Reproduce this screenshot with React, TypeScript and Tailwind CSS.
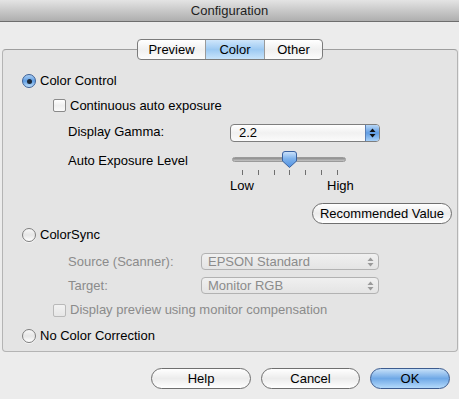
import React from "react";

const font = { fontFamily: '"Liberation Sans", Arial, sans-serif' };

const Radio = ({ checked }: { checked?: boolean }) =>
    checked ? (
        <span className="flex w-[14px] h-[14px] shrink-0 items-center justify-center rounded-full border border-[#3b5f96] bg-gradient-to-b from-[#a9cdf2] via-[#5f9de2] to-[#bfe0fb]">
            <span className="w-[5px] h-[5px] rounded-full bg-[#1c2a3a]" />
        </span>
    ) : (
        <span className="block w-[14px] h-[14px] shrink-0 rounded-full border border-[#7e7e7e] bg-gradient-to-b from-[#f8f8f8] via-[#e6e6e6] to-[#ffffff] shadow-[0_1px_0_rgba(255,255,255,0.6)]" />
    );

const Checkbox = ({ disabled }: { disabled?: boolean }) => (
    <span
        className={`block w-[13px] h-[13px] shrink-0 rounded-[2px] border bg-gradient-to-b ${
            disabled ? "border-[#b9b9b9] from-[#f2f2f2] to-[#e6e6e6]" : "border-[#8a8a8a] from-[#ffffff] via-[#f0f0f0] to-[#fafafa]"
        }`}
    />
);

const Arrows = ({ color }: { color: string }) => (
    <svg width="7" height="10" viewBox="0 0 7 10">
        <path d="M3.5 0.5 L6.5 4 L0.5 4 Z" fill={color} />
        <path d="M3.5 9.5 L6.5 6 L0.5 6 Z" fill={color} />
    </svg>
);

const Knob = () => (
    <svg width="15" height="17" viewBox="0 0 15 17">
        <defs>
            <linearGradient id="kg" x1="0" y1="0" x2="0" y2="1">
                <stop offset="0" stopColor="#cfe4fb" />
                <stop offset="0.45" stopColor="#7fb3ec" />
                <stop offset="1" stopColor="#4f8fe0" />
            </linearGradient>
        </defs>
        <path d="M3 0.5 H12 Q14.5 0.5 14.5 3 V10 L7.5 16.5 L0.5 10 V3 Q0.5 0.5 3 0.5 Z" fill="url(#kg)" stroke="#3a62a0" />
    </svg>
);

const Button = ({ label, w, primary }: { label: string; w: string; primary?: boolean }) => (
    <button
        className={`${w} h-[21px] rounded-full border text-[13px] leading-none bg-gradient-to-b ${
            primary
                ? "border-[#3d5c8f] from-[#c6e0f8] via-[#6fa8e6] to-[#b4dafb] text-black"
                : "border-[#6f6f6f] from-[#ffffff] via-[#ececec] to-[#ffffff] text-black"
        }`}
    >
        {label}
    </button>
);

const App = () => {
    const ticks = [0, 1, 2, 3, 4, 5, 6];
    return (
        <div style={font} className="w-[459px] h-[399px] bg-[#ececec] flex flex-col text-[13px] text-black overflow-hidden">
            <div className="h-[22px] shrink-0 flex items-center justify-center bg-gradient-to-b from-[#e4e4e4] to-[#aeaeae] border-b border-[#6e6e6e] text-[#1e1e1e]">
                Configuration
            </div>

            <div className="relative z-10 mt-[17px] flex justify-center pl-[1px]">
                <div className="flex h-[21px] rounded-[4px] border border-[#7b7b7b] overflow-hidden bg-gradient-to-b from-[#ffffff] via-[#f0f0f0] to-[#fcfcfc]">
                    <div className="w-[68px] flex items-center justify-center border-r border-[#9a9a9a]">Preview</div>
                    <div className="w-[59px] flex items-center justify-center border-r border-[#9a9a9a] bg-gradient-to-b from-[#cfe6fb] via-[#9cc9f2] to-[#c8e4fb]">Color</div>
                    <div className="w-[57px] flex items-center justify-center">Other</div>
                </div>
            </div>

            <div className="mt-[-11px] ml-[2px] mr-[1px] h-[303px] rounded-[4px] border border-[#b4b4b4] border-t-[#9e9e9e] bg-[#e4e4e4] flex flex-col pt-[22px]">
                <div className="h-[18px] flex items-center pl-[19px] gap-[4px]">
                    <Radio checked />
                    <span>Color Control</span>
                </div>

                <div className="h-[17px] mt-[7px] flex items-center pl-[50px] gap-[4px]">
                    <Checkbox />
                    <span>Continuous auto exposure</span>
                </div>

                <div className="h-[18px] mt-[10px] flex items-center pl-[65px]">
                    <span className="w-[162px] pb-[3px]">Display Gamma:</span>
                    <div className="w-[150px] h-[18px] flex rounded-[4px] border border-[#7e7e7e] overflow-hidden bg-gradient-to-b from-[#ffffff] via-[#f1f1f1] to-[#fbfbfb]">
                        <span className="flex-1 pl-[8px] flex items-center">2.2</span>
                        <span className="w-[14px] flex items-center justify-center border-l border-[#5b7fb4] bg-gradient-to-b from-[#b8d7f6] via-[#5f9ce3] to-[#a8d1f8]">
                            <Arrows color="#111" />
                        </span>
                    </div>
                </div>

                <div className="h-[18px] mt-[8px] flex items-center pl-[65px]">
                    <span className="w-[164px] pt-[4px]">Auto Exposure Level</span>
                    <div className="relative w-[114px] h-[18px] flex items-center">
                        <div className="w-full h-[5px] rounded-full bg-gradient-to-b from-[#8c8c8c] to-[#c4c4c4] border border-[#9a9a9a]" />
                        <div className="absolute left-[50px] top-[1px]">
                            <Knob />
                        </div>
                    </div>
                </div>

                <div className="h-[5px] mt-[2px] flex pl-[239px]">
                    {ticks.map((t) => (
                        <span key={t} className="w-[1px] h-[5px] bg-[#6f6f6f] mr-[14.8px]" />
                    ))}
                </div>

                <div className="h-[14px] mt-[4px] flex items-center pl-[227px]">
                    <span className="w-[97px]">Low</span>
                    <span>High</span>
                </div>

                <div className="h-[20px] mt-[10px] flex justify-end pr-[5px]">
                    <Button label="Recommended Value" w="w-[140px]" />
                </div>

                <div className="h-[18px] mt-[3px] flex items-center pl-[19px] gap-[4px]">
                    <Radio />
                    <span>ColorSync</span>
                </div>

                <div className="h-[17px] mt-[9px] flex items-center pl-[65px] text-[#8b8b8b]">
                    <span className="w-[133px]">Source (Scanner):</span>
                    <div className="w-[178px] h-[17px] flex items-center rounded-[4px] border border-[#b2b2b2] bg-gradient-to-b from-[#f0f0f0] to-[#e4e4e4] pl-[6px] pr-[4px]">
                        <span className="flex-1">EPSON Standard</span>
                        <Arrows color="#9a9a9a" />
                    </div>
                </div>

                <div className="h-[17px] mt-[7px] flex items-center pl-[65px] text-[#8b8b8b]">
                    <span className="w-[133px]">Target:</span>
                    <div className="w-[178px] h-[17px] flex items-center rounded-[4px] border border-[#b2b2b2] bg-gradient-to-b from-[#f0f0f0] to-[#e4e4e4] pl-[6px] pr-[4px]">
                        <span className="flex-1">Monitor RGB</span>
                        <Arrows color="#9a9a9a" />
                    </div>
                </div>

                <div className="h-[16px] mt-[8px] flex items-center pl-[50px] gap-[4px] text-[#8b8b8b]">
                    <Checkbox disabled />
                    <span>Display preview using monitor compensation</span>
                </div>

                <div className="h-[18px] mt-[9px] flex items-center pl-[19px] gap-[4px]">
                    <Radio />
                    <span>No Color Correction</span>
                </div>
            </div>

            <div className="mt-[16px] flex justify-end pr-[9px] gap-[10px]">
                <Button label="Help" w="w-[100px]" />
                <Button label="Cancel" w="w-[99px]" />
                <Button label="OK" w="w-[80px]" primary />
            </div>
        </div>
    );
};

export default App;
